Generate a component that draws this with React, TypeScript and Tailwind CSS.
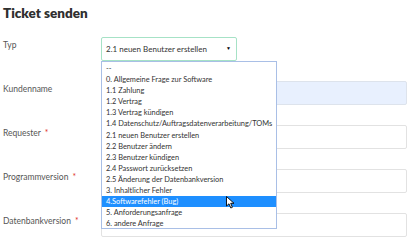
import React from 'react';

const options = [
  '--',
  '0. Allgemeine Frage zur Software',
  '1.1 Zahlung',
  '1.2 Vertrag',
  '1.3 Vertrag kündigen',
  '1.4 Datenschutz/Auftragsdatenverarbeitung/TOMs',
  '2.1 neuen Benutzer erstellen',
  '2.2 Benutzer ändern',
  '2.3 Benutzer kündigen',
  '2.4 Passwort zurücksetzen',
  '2.5 Änderung der Datenbankversion',
  '3. Inhaltlicher Fehler',
  '4.Softwarefehler (Bug)',
  '5. Anforderungsanfrage',
  '6. andere Anfrage',
];

const fields = [
  { label: 'Kundenname', required: false, filled: true },
  { label: 'Requester', required: true, filled: false },
  { label: 'Programmversion', required: true, filled: false },
  { label: 'Datenbankversion', required: true, filled: false },
];

function Label({ text, required }: { text: string; required?: boolean }) {
  return (
    <div className="w-[98px] shrink-0 pt-[2px] text-[8.5px] leading-[12px] text-[#555]">
      {text}
      {required && <span className="ml-[4px] text-[#e0342b]">*</span>}
    </div>
  );
}

export default function App() {
  return (
    <div className="relative w-[414px] h-[245px] overflow-hidden bg-white pl-[3px] font-['Lato',sans-serif]">
      <h1 className="pt-[4px] h-[37px] text-[13.5px] leading-[18px] font-extrabold text-[#2f2f2f]">Ticket senden</h1>

      {/* Typ */}
      <div className="flex h-[24px] mb-[20px]">
        <Label text="Typ" />
        <div className="flex items-center justify-between w-[136px] h-[24px] border border-[#a6e2c6] rounded-[2px] pl-[4px] pr-[5px] text-[8px] text-[#333]">
          <span>2.1 neuen Benutzer erstellen</span>
          <span className="text-[5px] text-black">▼</span>
        </div>
      </div>

      {fields.map((f) => (
        <div key={f.label} className="flex h-[24px] mb-[20px]">
          <Label text={f.label} required={f.required} />
          <div
            className={`w-[306px] h-[24px] border rounded-[2px] ${
              f.filled ? 'bg-[#e8f0fe] border-[#dde3ec]' : 'bg-white border-[#e2e2e2]'
            }`}
          />
        </div>
      ))}

      {/* open dropdown list */}
      <div className="absolute left-[101px] top-[61px] w-[176px] h-[168px] border border-[#a9bfe6] bg-white pt-[1px]">
        {options.map((o) => {
          const active = o.startsWith('4.');
          return (
            <div
              key={o}
              className={`h-[11.1px] leading-[11px] px-[4px] text-[7.4px] whitespace-nowrap ${
                active ? 'bg-[#1e8fff] text-white' : 'text-[#333]'
              }`}
            >
              {o}
            </div>
          );
        })}
      </div>

      {/* mouse cursor */}
      <svg className="absolute left-[226px] top-[196px]" width="9" height="13" viewBox="0 0 9 13">
        <path d="M0.5 0.5 L0.5 10 L3 7.8 L4.8 12 L6.4 11.3 L4.7 7.3 L8 7.3 Z" fill="white" stroke="black" strokeWidth="0.9" strokeLinejoin="round" />
      </svg>
    </div>
  );
}
